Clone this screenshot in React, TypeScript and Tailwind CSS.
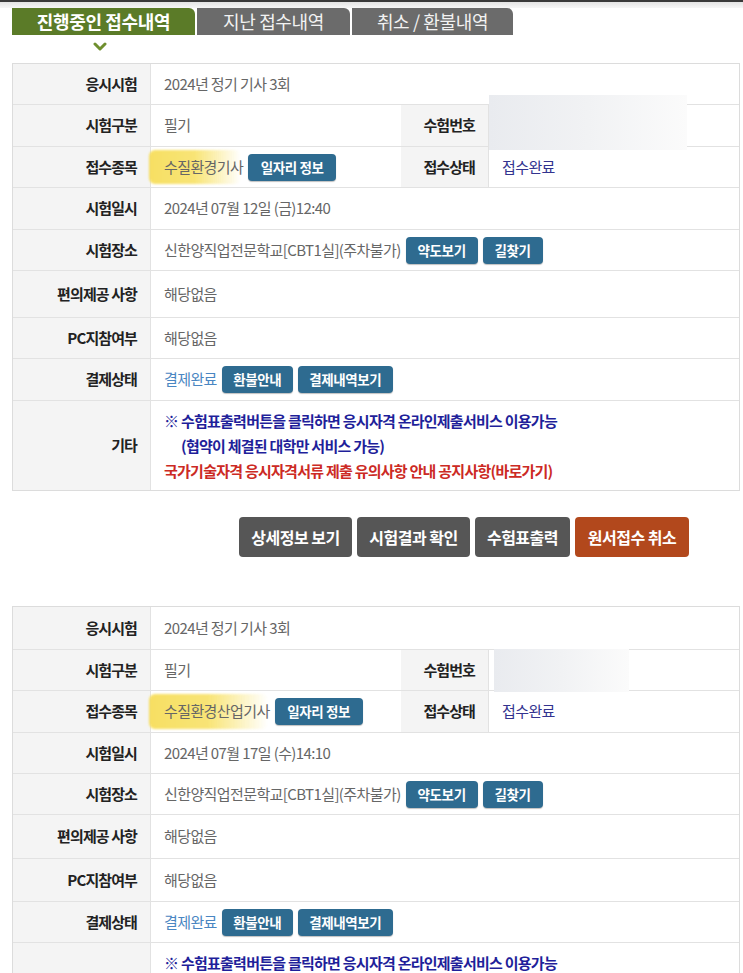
import React from "react";

const FONT = { fontFamily: '"Noto Sans CJK KR", "Noto Sans", sans-serif' };

function Btn({ children, w }: { children: React.ReactNode; w: string }) {
  return (
    <span
      className={`inline-flex items-center justify-center h-[27px] rounded-[4px] bg-[#2e6b90] text-white text-[13.5px] font-bold tracking-[-0.03em] shadow-[0_1px_1px_rgba(0,0,0,0.25)] ${w}`}
    >
      {children}
    </span>
  );
}

function Label({ children, w = "w-[138px]" }: { children: React.ReactNode; w?: string }) {
  return (
    <div
      className={`${w} shrink-0 bg-[#f4f4f4] flex items-center justify-end pr-[13px] text-[15px] font-bold text-[#222] tracking-[-0.06em] border-r border-[#e2e2e2]`}
    >
      {children}
    </div>
  );
}

function Value({ children, className = "" }: { children: React.ReactNode; className?: string }) {
  return (
    <div className={`flex-1 flex items-center pl-[13px] text-[15px] text-[#666] tracking-[-0.04em] ${className}`}>
      {children}
    </div>
  );
}

function Row({ h, children, last = false }: { h: string; children: React.ReactNode; last?: boolean }) {
  return <div className={`flex ${h} ${last ? "" : "border-b border-[#e2e2e2]"}`}>{children}</div>;
}

function Highlight({ children }: { children: React.ReactNode }) {
  return (
    <span className="relative inline-block">
      <span className="absolute left-[-15px] right-[2px] top-[-6px] bottom-[-6px] rounded-[6px] bg-gradient-to-r from-[#f7dc52] via-[#f8e268] to-[#f8e26800] opacity-90 blur-[1px]" />
      <span className="relative">{children}</span>
    </span>
  );
}

type TableProps = {
  heights: string[];
  subject: string;
  date: string;
  blur: string;
};

function ExamTable({ heights, subject, date, blur }: TableProps) {
  return (
    <div className="relative ml-[12px] w-[728px] border border-[#dcdcdc] bg-white">
      <Row h={heights[0]}>
        <Label>응시시험</Label>
        <Value>2024년 정기 기사 3회</Value>
      </Row>
      <Row h={heights[1]}>
        <Label>시험구분</Label>
        <Value className="w-[250px] flex-none">필기</Value>
        <Label w="w-[88px]">수험번호</Label>
        <Value> </Value>
      </Row>
      <Row h={heights[2]}>
        <Label>접수종목</Label>
        <Value className="w-[250px] flex-none gap-[5px]">
          <Highlight>{subject}</Highlight>
          <Btn w="w-[88px]">일자리 정보</Btn>
        </Value>
        <Label w="w-[88px]">접수상태</Label>
        <Value className="text-[#33338f]">접수완료</Value>
      </Row>
      <Row h={heights[3]}>
        <Label>시험일시</Label>
        <Value>{date}</Value>
      </Row>
      <Row h={heights[4]}>
        <Label>시험장소</Label>
        <Value className="gap-[5px]">
          <span>신한양직업전문학교[CBT1실](주차불가)</span>
          <Btn w="w-[72px]">약도보기</Btn>
          <Btn w="w-[60px]">길찾기</Btn>
        </Value>
      </Row>
      <Row h={heights[5]}>
        <Label>편의제공 사항</Label>
        <Value>해당없음</Value>
      </Row>
      <Row h={heights[6]}>
        <Label>PC지참여부</Label>
        <Value>해당없음</Value>
      </Row>
      <Row h={heights[7]}>
        <Label>결제상태</Label>
        <Value className="gap-[5px]">
          <span className="text-[#4a86c2]">결제완료</span>
          <Btn w="w-[71px]">환불안내</Btn>
          <Btn w="w-[95px]">결제내역보기</Btn>
        </Value>
      </Row>
      <Row h={heights[8]} last>
        <Label>기타</Label>
        <div className="flex-1 flex flex-col justify-center pl-[13px] text-[15px] font-bold tracking-[-0.05em] leading-[25px]">
          <span className="text-[#1f1f9a]">※ 수험표출력버튼을 클릭하면 응시자격 온라인제출서비스 이용가능</span>
          <span className="text-[#1f1f9a] pl-[17px]">(협약이 체결된 대학만 서비스 가능)</span>
          <span className="text-[#cc2a24]">국가기술자격 응시자격서류 제출 유의사항 안내 공지사항(바로가기)</span>
        </div>
      </Row>
      <div className={`absolute ${blur} bg-gradient-to-r from-[#e9ebef] via-[#f1f2f4] to-[#fbfbfb]`} />
    </div>
  );
}

export default function App() {
  return (
    <div className="w-[743px] h-[973px] bg-white overflow-hidden" style={FONT}>
      <div className="h-[2px] bg-[#3a3a3a]" />
      <div className="h-[6px] bg-gradient-to-b from-[#e4e4e4] to-[#f7f7f7]" />
      <div className="flex items-end pl-[12px] gap-[2px] h-[27px]">
        <div className="w-[183px] h-[27px] rounded-tr-[6px] bg-[#5b7b28] flex items-center justify-center text-white text-[18px] font-bold tracking-[-0.02em]">
          진행중인 접수내역
        </div>
        <div className="w-[153px] h-[27px] rounded-tr-[6px] bg-[#6b6b6b] flex items-center justify-center text-[#f2f2f2] text-[18px] tracking-[-0.02em]">
          지난 접수내역
        </div>
        <div className="w-[161px] h-[27px] rounded-tr-[6px] bg-[#6b6b6b] flex items-center justify-center text-[#f2f2f2] text-[18px] tracking-[-0.02em]">
          취소 / 환불내역
        </div>
      </div>
      <div className="h-[28px] pl-[93px] pt-[7px]">
        <svg width="14" height="9" viewBox="0 0 14 9">
          <polyline points="2,2 7,7 12,2" fill="none" stroke="#6f8f2e" strokeWidth="3" strokeLinecap="round" strokeLinejoin="round" />
        </svg>
      </div>

      <ExamTable
        heights={["h-[41px]", "h-[42px]", "h-[41px]", "h-[42px]", "h-[41px]", "h-[47px]", "h-[41px]", "h-[42px]", "h-[89px]"]}
        subject="수질환경기사"
        date="2024년 07월 12일 (금)12:40"
        blur="left-[476px] top-[31px] w-[198px] h-[55px]"
      />

      <div className="flex gap-[5px] pl-[239px] mt-[26px]">
        <button className="w-[113px] h-[40px] rounded-[4px] bg-[#565656] text-white text-[16px] font-bold tracking-[-0.03em]">상세정보 보기</button>
        <button className="w-[113px] h-[40px] rounded-[4px] bg-[#565656] text-white text-[16px] font-bold tracking-[-0.03em]">시험결과 확인</button>
        <button className="w-[95px] h-[40px] rounded-[4px] bg-[#565656] text-white text-[16px] font-bold tracking-[-0.03em]">수험표출력</button>
        <button className="w-[114px] h-[40px] rounded-[4px] bg-[#b2481c] text-white text-[16px] font-bold tracking-[-0.03em]">원서접수 취소</button>
      </div>

      <div className="h-[49px]" />

      <ExamTable
        heights={["h-[43px]", "h-[41px]", "h-[42px]", "h-[41px]", "h-[41px]", "h-[44px]", "h-[43px]", "h-[41px]", "h-[89px]"]}
        subject="수질환경산업기사"
        date="2024년 07월 17일 (수)14:10"
        blur="left-[481px] top-[42px] w-[135px] h-[43px]"
      />
    </div>
  );
}
